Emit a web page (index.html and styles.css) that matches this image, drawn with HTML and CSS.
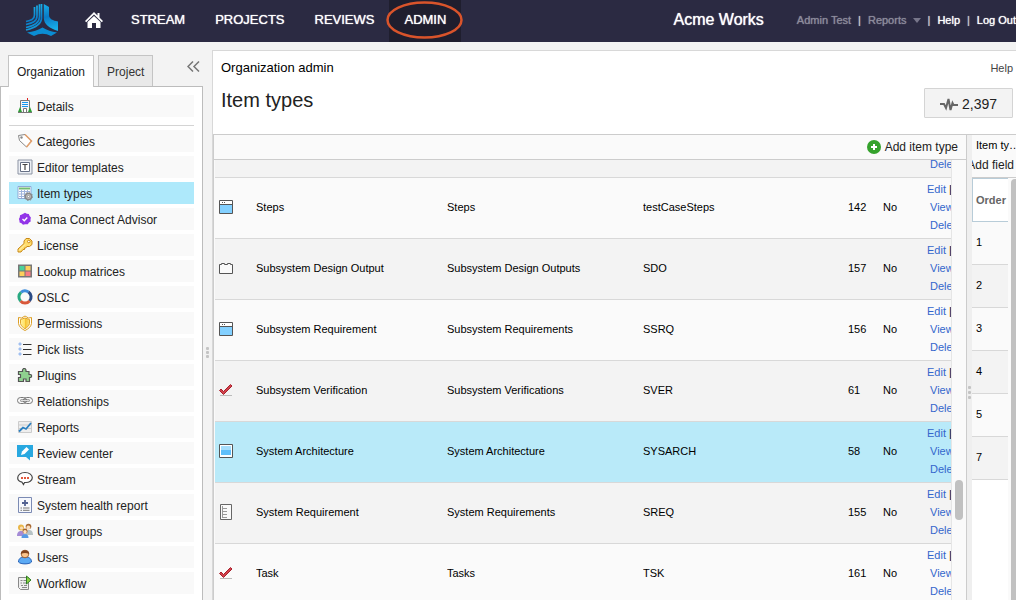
FILE: index.html
```html
<!DOCTYPE html>
<html lang="en">
<head>
<meta charset="utf-8">
<title>Item types - Organization admin</title>
<link rel="stylesheet" href="styles.css">
</head>
<body>
<svg class="sprite" aria-hidden="true">
  <defs>
    <linearGradient id="blade" gradientUnits="userSpaceOnUse" x1="14" y1="2" x2="20" y2="28"><stop offset="0" stop-color="#18aee8"/><stop offset=".5" stop-color="#0a7ac5"/><stop offset="1" stop-color="#18aee8"/></linearGradient>
    <linearGradient id="gold" x1="0" y1="0" x2="1" y2="0"><stop offset="0" stop-color="#fff0a0"/><stop offset=".5" stop-color="#ffe060"/><stop offset=".5" stop-color="#f6c02c"/><stop offset="1" stop-color="#fbe07a"/></linearGradient>
  </defs>
  <symbol id="i-details" viewBox="0 0 16 16"><path d="M10.5 0v3" stroke="#d22" /><path d="M3.5 14V2.500h9V14" fill="#f4f4f4" stroke="#777"/><path d="M5 4.500h6M5 6.500h6M5 8.500h6" stroke="#1497f0"/><path d="M6.500 14v-3.500h3V14" fill="#fff" stroke="#777"/><path d="M1 14l2-5 2 5zM11 14l2-5 2 5z" fill="#2e9e35"/><path d="M1 14.500h14" stroke="#777"/></symbol>
  <symbol id="i-tag" viewBox="0 0 16 16"><path d="M1.500 2.500l6.500-1 6.500 6.500-5 6-7-6.500z" fill="#fff" stroke="#888"/><path d="M8 1.500l6.500 6.500-5 6" fill="none" stroke="#e3a06c" stroke-width="1.500"/><circle cx="4.500" cy="4.500" r="1.200" fill="#888"/></symbol>
  <symbol id="i-template" viewBox="0 0 16 16"><path d="M1 1h14v14H1z" fill="#eceff4" stroke="#8b93a3"/><path d="M3.500 3.500h9v9h-9z" fill="#fff" stroke="#667085"/><path d="M5.500 5.500h5M8 5.500V11" stroke="#444" stroke-width="1.200"/></symbol>
  <symbol id="i-types" viewBox="0 0 16 16"><path d="M1 1.500h13v12H1z" fill="#fff" stroke="#8fa9d5"/><path d="M2 3.500h11" stroke="#72bd72" stroke-width="2"/><path d="M2 6.500h11M2 9h8M2 11.500h7M4.500 5v8M7.500 5v8M10.500 5v4" stroke="#9fb4dc"/><circle cx="11.500" cy="11.500" r="3" fill="#ddd" stroke="#888" stroke-width="1.500"/><circle cx="11.500" cy="11.500" r="4" fill="none" stroke="#888" stroke-dasharray="1.500 1.600"/><circle cx="11.500" cy="11.500" r="1.200" fill="#fff" stroke="#888"/></symbol>
  <symbol id="i-advisor" viewBox="0 0 16 16"><path d="M8 1.800l1.800 1 2 .2.800 1.900 1.300 1.500-.4 2 .2 2-1.700 1.200-1.200 1.700H8l-2 .4-1.500-1.400-1.900-.9-.2-2L1.900 8l.9-1.800.2-2 1.900-.8z" fill="#9235e8"/><path d="M5.500 8l1.800 1.800 3-3.300" fill="none" stroke="#fff" stroke-width="1.300"/></symbol>
  <symbol id="i-key" viewBox="0 0 16 16"><path d="M9 1.500h3.500L15 4v3.500L12.500 9.500H9.800l-1 1.500H7.500v1.500H6L4 15H1v-3l6-5.500V4z" fill="#ffdc6b" stroke="#c88818"/><path d="M2 13.500l6-6" stroke="#fff3b8"/><circle cx="11.800" cy="4.500" r="1.300" fill="#fff" stroke="#c88818"/></symbol>
  <symbol id="i-matrix" viewBox="0 0 16 16"><path d="M1 1.500h14v13H1z" fill="#777"/><path d="M2.500 3h5v4.500h-5z" fill="#4bd19a"/><path d="M8.500 3h5v4.500h-5zM2.500 8.500h5V13h-5z" fill="#fdd05c"/><path d="M8.500 8.500h5V13h-5z" fill="#fa7d83"/></symbol>
  <symbol id="i-oslc" viewBox="0 0 16 16"><g fill="none" stroke-width="3"><path d="M4 3.400A6 6 0 0 1 11.500 3" stroke="#3d8ddd"/><path d="M11.500 3A6 6 0 0 1 12.500 12" stroke="#2b4c86"/><path d="M12.500 12A6 6 0 0 1 3.500 12" stroke="#d9583a"/><path d="M3.500 12A6 6 0 0 1 4 3.400" stroke="#28a981"/></g></symbol>
  <symbol id="i-shield" viewBox="0 0 16 16"><path d="M1.500 2.500l3 .5L8 1l3.500 2 3-.5v6C14 12 11 14 8 15.500 5 14 2 12 1.500 8.500z" fill="#fff" stroke="#dc9f25"/><path d="M3.500 4.500L8 3l4.500 1.500V8.500C12 11 10 12.500 8 13.700 6 12.500 4 11 3.500 8.500z" fill="url(#gold)" stroke="#e0a42b"/></symbol>
  <symbol id="i-list" viewBox="0 0 16 16"><path d="M2 2h2v2H2zM2 7h2v2H2zM2 12h2v2H2z" fill="#8ab0ec" stroke="#a7c4f2"/><path d="M6 3.500h8.500M6 8.500h8.500M6 13.500h8.500" stroke="#333"/></symbol>
  <symbol id="i-plugin" viewBox="0 0 16 16"><path d="M1.500 4.500h4V3l1-1.500h1.500l1 1.500v1.500h3V7.500h1.500l1 .5v2l-1 .5H12.500v4h-3.500v-2.500h-2.500v2.500h-5v-4h2V7.500h-2z" fill="#8fd08f" stroke="#555" stroke-width="1.200"/></symbol>
  <symbol id="i-chain" viewBox="0 0 16 16"><g fill="none" stroke="#777"><rect x=".5" y="4.500" width="9" height="6" rx="3"/><rect x="6.500" y="4.500" width="9" height="6" rx="3"/><path d="M3.500 7.500h9" stroke="#555" stroke-width="2"/><path d="M4 7.500h8" stroke="#ddd"/></g></symbol>
  <symbol id="i-chart" viewBox="0 0 16 16"><path d="M1.500 2.500h13v11h-13z" fill="#eee" stroke="#ccc"/><path d="M2 6h12M2 9.500h12" stroke="#ccc"/><path d="M2 12.500l4-4 3 1.500 5-6" fill="none" stroke="#2a7fc0" stroke-width="1.800"/></symbol>
  <symbol id="i-review" viewBox="0 0 16 16"><path d="M0 0h16v12h-3v3.500L9 12H0z" fill="#28a8e0"/><path d="M4 10l1-3.500L9.500 2 12 4.500 7.500 9z" fill="#fff"/></symbol>
  <symbol id="i-stream" viewBox="0 0 16 16"><path d="M8 1.500c4.500 0 7.300 2.500 7.300 5.300S12 11.500 9 11.500H7.500L6.500 13.500 5 11.200C2.500 10.600.7 9 .7 7 .7 4 3.500 1.500 8 1.500z" fill="#fff" stroke="#444" stroke-width="1.200"/><path d="M4 6h2v2H4zM7 6h2v2H7zM10 6h2v2h-2z" fill="#e2573c"/></symbol>
  <symbol id="i-health" viewBox="0 0 16 16"><path d="M1.500.500h13v15h-13z" fill="#f6f8fd" stroke="#7c8bb4"/><path d="M8 3v6M5 6h6" stroke="#526293" stroke-width="1.800"/><path d="M3.500 11h1.500M6 11h6.500M3.500 13.300h1.500M6 13.300h6.500" stroke="#777"/></symbol>
  <symbol id="i-group" viewBox="0 0 16 16"><circle cx="4" cy="4.500" r="3" fill="#e9b648"/><circle cx="4.500" cy="5" r="1.600" fill="#fbdcba"/><path d="M0 13c0-4 2-5 4-5s3 1 3 5z" fill="#a48bd6"/><circle cx="11.500" cy="3.500" r="2.800" fill="#a96b35"/><circle cx="11.300" cy="4.500" r="1.900" fill="#fbdcba"/><path d="M9 12c0-4 1-5 3-5s4 1 4 5z" fill="#b7c3c6"/><circle cx="8" cy="8" r="2.500" fill="#a2612c"/><circle cx="8" cy="8.800" r="1.800" fill="#ffdfbd"/><path d="M4.500 15c0-3 1.500-4 3.500-4s3.500 1 3.500 4z" fill="#5799e4"/></symbol>
  <symbol id="i-user" viewBox="0 0 16 16"><path d="M1.500 13c0-4 3-5 6.500-5s6.500 1 6.500 5c-2 2.500-11 2.500-13 0z" fill="#5caaf4" stroke="#255fb5"/><circle cx="8" cy="5" r="3.800" fill="#fbc48b" stroke="#8a4a1c" stroke-width=".8"/><path d="M3.800 5C3.500 0 12.500 0 12.200 5 9 3.800 7 3.800 3.800 5z" fill="#81441d"/></symbol>
  <symbol id="i-flow" viewBox="0 0 16 16"><path d="M1.500 2.500h10v12h-8l-2-2z" fill="#eee" stroke="#888"/><path d="M3.500 5.500h2M6.500 5.500H9M3.500 8h1.500M6 8h3M4 10.500h2M7 10.500h3M5 12.500h5" stroke="#888"/><path d="M9.500 1v8l4.500-4z" fill="#8bd042" stroke="#2f7d26"/></symbol>
  <symbol id="i-window" viewBox="0 0 16 16"><path d="M1.500 1.500h13v13h-13z" fill="#fff" stroke="#555"/><path d="M2 6h12v8H2z" fill="#83d0ff"/><path d="M2 5.500h12" stroke="#555"/><path d="M4 3.500h1M6 3.500h1" stroke="#555"/></symbol>
  <symbol id="i-brick" viewBox="0 0 16 16"><path d="M1.500 4.500h2v-1h3v1h3v-1h3v1h2v9h-13z" fill="#fafafa" stroke="#555"/></symbol>
  <symbol id="i-check" viewBox="0 0 16 16"><path d="M2 13.500h12" stroke="#bbb"/><path d="M1.500 8.500l1.500-1.500 2.500 2.500 7-7 1.500 1.500L5.500 12.500z" fill="#d0404a" stroke="#a8202c"/></symbol>
  <symbol id="i-screen" viewBox="0 0 16 16"><path d="M1.500 1.500h13v13h-13z" fill="#fff" stroke="#555"/><path d="M3 3h10v4H3z" fill="#a5defc"/><path d="M3 7h10v5H3z" fill="#60bffa"/></symbol>
  <symbol id="i-ruler" viewBox="0 0 16 16"><path d="M2.500.500h11v15h-11z" fill="#fafafa" stroke="#666"/><path d="M4.500 2v12M5 4.500h4M5 7.500h4M5 10.500h4M5 13.500h4" stroke="#999"/></symbol>
</svg>

<header class="topbar">
  <a class="logo" href="#" aria-label="Jama Connect">
    <svg viewBox="0 0 34 34"><g fill="none" stroke="url(#blade)" stroke-width="1.700"><path d="M9.500 4V12C9.500 16.500 6 17.500 1 18.500"/><path d="M12 2.500V13C12 18.500 7 20 1 21.500"/><path d="M14.500 1.300V14C14.500 20.500 8 23 1 24.500"/><path d="M16.500 1V15C16.500 21.500 9 25 1 27"/></g><path d="M18.800 1L24 4V12C24 16 28 17.500 33 18.500V28C25 25.500 18.800 21.500 18.800 15Z" fill="url(#blade)"/><path d="M2 29.500Q11 28.500 17.500 24.500 24 28.500 32 29.500L26 33Q17.500 28.500 9 33Z" fill="#0b8dd3"/></svg>
  </a>
  <a class="home" href="#" aria-label="Home">
    <svg viewBox="0 0 18 16"><path d="M9 0l3.500 3.500V1h2v4.500L18 9l-1.200 1.200L9 2.600 1.200 10.200 0 9z" fill="#fff"/><path d="M9 4l6.500 6v6H11v-5H7v5H2.500v-6z" fill="#fff"/></svg>
  </a>
  <nav class="nav">
    <a href="#">STREAM</a>
    <a href="#">PROJECTS</a>
    <a href="#">REVIEWS</a>
    <a href="#" class="current">ADMIN<svg class="ring" viewBox="0 0 77 38"><ellipse cx="38.500" cy="19" rx="37" ry="17.500" fill="none" stroke="#d9542b" stroke-width="2.500"/></svg></a>
  </nav>
  <strong class="org">Acme Works</strong>
  <div class="account">
    <a class="dim" href="#">Admin Test</a><i>|</i><a class="dim" href="#">Reports <svg viewBox="0 0 8 5"><path d="M0 0h8L4 5z" fill="#77768a"/></svg></a><i>|</i><a href="#">Help</a><i>|</i><a href="#">Log Out</a>
  </div>
</header>

<div class="page">
  <aside class="side">
    <div class="tabs">
      <button class="tab on">Organization</button>
      <button class="tab">Project</button>
      <button class="collapse" aria-label="Collapse"><svg viewBox="0 0 13 11"><path d="M6 .500l-5 5 5 5M12 .500l-5 5 5 5" fill="none" stroke="#777" stroke-width="1.500"/></svg></button>
    </div>
    <nav class="menu">
      <a href="#"><svg><use href="#i-details"/></svg>Details</a>
      <hr>
      <a href="#"><svg><use href="#i-tag"/></svg>Categories</a>
      <a href="#"><svg><use href="#i-template"/></svg>Editor templates</a>
      <a href="#" class="on"><svg><use href="#i-types"/></svg>Item types</a>
      <a href="#"><svg><use href="#i-advisor"/></svg>Jama Connect Advisor</a>
      <a href="#"><svg><use href="#i-key"/></svg>License</a>
      <a href="#"><svg><use href="#i-matrix"/></svg>Lookup matrices</a>
      <a href="#"><svg><use href="#i-oslc"/></svg>OSLC</a>
      <a href="#"><svg><use href="#i-shield"/></svg>Permissions</a>
      <a href="#"><svg><use href="#i-list"/></svg>Pick lists</a>
      <a href="#"><svg><use href="#i-plugin"/></svg>Plugins</a>
      <a href="#"><svg><use href="#i-chain"/></svg>Relationships</a>
      <a href="#"><svg><use href="#i-chart"/></svg>Reports</a>
      <a href="#"><svg><use href="#i-review"/></svg>Review center</a>
      <a href="#"><svg><use href="#i-stream"/></svg>Stream</a>
      <a href="#"><svg><use href="#i-health"/></svg>System health report</a>
      <a href="#"><svg><use href="#i-group"/></svg>User groups</a>
      <a href="#"><svg><use href="#i-user"/></svg>Users</a>
      <a href="#"><svg><use href="#i-flow"/></svg>Workflow</a>
    </nav>
  </aside>
  <div class="splitter"><span></span><span></span><span></span></div>
  <main class="main">
    <div class="heading">
      <div>
        <p class="crumb">Organization admin</p>
        <h1>Item types</h1>
      </div>
      <div class="heading-side">
        <a href="#" class="help">Help</a>
        <button class="activity"><svg viewBox="0 0 18 14"><path d="M0 7h4l2 4 2.500-9 2 11 2-7 1 2H18" fill="none" stroke="#666" stroke-width="2"/></svg>2,397</button>
      </div>
    </div>
    <div class="panes">
      <section class="types">
        <div class="toolbar"><button class="add"><svg viewBox="0 0 14 14"><circle cx="7" cy="7" r="7" fill="#35a22c"/><path d="M7 4v6M4 7h6" stroke="#fff" stroke-width="2"/></svg>Add item type</button></div>
        <div class="scroller">
          <div class="rows">
            <table>
              <colgroup><col class="c-icon"><col class="c-name"><col class="c-plural"><col class="c-key"><col class="c-id"><col class="c-flag"><col class="c-act"></colgroup>
              <tbody>
              <tr><td></td><td></td><td></td><td></td><td></td><td></td><td class="act"><span><a href="#">Edit</a> |</span><span><a href="#">View</a> |</span><span><a href="#">Delete</a></span></td></tr>
              <tr><td><svg><use href="#i-window"/></svg></td><td>Steps</td><td>Steps</td><td>testCaseSteps</td><td>142</td><td>No</td><td class="act"><span><a href="#">Edit</a> |</span><span><a href="#">View</a> |</span><span><a href="#">Delete</a></span></td></tr>
              <tr><td><svg><use href="#i-brick"/></svg></td><td>Subsystem Design Output</td><td>Subsystem Design Outputs</td><td>SDO</td><td>157</td><td>No</td><td class="act"><span><a href="#">Edit</a> |</span><span><a href="#">View</a> |</span><span><a href="#">Delete</a></span></td></tr>
              <tr><td><svg><use href="#i-window"/></svg></td><td>Subsystem Requirement</td><td>Subsystem Requirements</td><td>SSRQ</td><td>156</td><td>No</td><td class="act"><span><a href="#">Edit</a> |</span><span><a href="#">View</a> |</span><span><a href="#">Delete</a></span></td></tr>
              <tr><td><svg><use href="#i-check"/></svg></td><td>Subsystem Verification</td><td>Subsystem Verifications</td><td>SVER</td><td>61</td><td>No</td><td class="act"><span><a href="#">Edit</a> |</span><span><a href="#">View</a> |</span><span><a href="#">Delete</a></span></td></tr>
              <tr class="selected"><td><svg><use href="#i-screen"/></svg></td><td>System Architecture</td><td>System Architecture</td><td>SYSARCH</td><td>58</td><td>No</td><td class="act"><span><a href="#">Edit</a> |</span><span><a href="#">View</a> |</span><span><a href="#">Delete</a></span></td></tr>
              <tr><td><svg><use href="#i-ruler"/></svg></td><td>System Requirement</td><td>System Requirements</td><td>SREQ</td><td>155</td><td>No</td><td class="act"><span><a href="#">Edit</a> |</span><span><a href="#">View</a> |</span><span><a href="#">Delete</a></span></td></tr>
              <tr><td><svg><use href="#i-check"/></svg></td><td>Task</td><td>Tasks</td><td>TSK</td><td>161</td><td>No</td><td class="act"><span><a href="#">Edit</a> |</span><span><a href="#">View</a> |</span><span><a href="#">Delete</a></span></td></tr>
              </tbody>
            </table>
          </div>
          <div class="track"><div class="thumb"></div></div>
        </div>
      </section>
      <div class="splitter thin"><span></span><span></span><span></span></div>
      <section class="fields">
        <div class="fields-head">
          <h2>Item ty…</h2>
          <button>Add field</button>
        </div>
        <div class="fields-body">
          <table>
            <thead><tr><th>Order</th></tr></thead>
            <tbody><tr><td>1</td></tr><tr><td>2</td></tr><tr><td>3</td></tr><tr><td>4</td></tr><tr><td>5</td></tr><tr><td>7</td></tr></tbody>
          </table>
          <div class="fields-track"></div>
        </div>
      </section>
    </div>
  </main>
</div>
</body>
</html>
```
FILE: styles.css
```css
* { box-sizing: border-box; }
body {
  margin: 0;
  height: 100vh;
  overflow: hidden;
  display: flex;
  flex-direction: column;
  background: #f3f3f3;
  color: #222;
  font: 12px/18px "Liberation Sans", Arial, sans-serif;
}
a { color: inherit; text-decoration: none; }
button { font: inherit; color: inherit; margin: 0; padding: 0; border: 0; background: none; white-space: nowrap; }
h1, h2, p { margin: 0; font-weight: normal; }
.sprite { position: absolute; width: 0; height: 0; }

.topbar {
  flex: none;
  height: 42px;
  display: flex;
  align-items: center;
  padding-left: 25px;
  background: #2b2a42;
  color: #fff;
  white-space: nowrap;
}
.logo svg { display: block; width: 34px; height: 34px; margin-bottom: 2px; }
.home { margin: 0 13px 0 26px; }
.home svg { display: block; width: 18px; height: 16px; margin-bottom: 2px; }
.nav { display: flex; flex: 1; font-size: 13px; line-height: 40px; text-shadow: 0 0 1px #fff; }
.nav a { padding: 0 15px 2px; }
.nav .current { position: relative; background: #1f1e2e; }
.ring { position: absolute; left: -3px; top: 1px; width: 77px; height: 38px; }
.org { font-size: 16px; font-weight: normal; text-shadow: 0 0 1px #fff; margin: 0 33px 3px 0; }
.account { font-size: 11px; margin: 0 0 3px; text-shadow: 0 0 1px currentColor; }
.account i { font-style: normal; margin: 0 7px; color: #c8c8d0; }
.account .dim { color: #8c8b9b; }
.account svg { width: 8px; height: 5px; margin-left: 3px; vertical-align: middle; }

.page { flex: 1; min-height: 0; display: flex; }
.side { width: 203px; flex: none; display: flex; flex-direction: column; padding-top: 13px; }
.tabs { display: flex; align-items: flex-start; gap: 4px; padding-left: 8px; }
.tab {
  height: 31px;
  padding: 2px 8px 0;
  border: 1px solid #c4c4c4;
  border-bottom: 0;
  background: #e9e9e9;
  color: #333;
}
.tab.on { height: 32px; margin-bottom: -1px; padding-top: 0; position: relative; background: #fff; color: #222; }
.collapse { margin: 6px 3px 0 auto; }
.collapse svg { display: block; width: 13px; height: 11px; }
.menu {
  flex: 1;
  min-height: 0;
  overflow: hidden;
  display: flex;
  flex-direction: column;
  gap: 4px;
  padding: 8px;
  border: 1px solid #bcbcbc;
  border-bottom: 0;
  background: #fff;
}
.menu a { flex: none; display: flex; align-items: center; gap: 4px; height: 22px; padding: 2px 0 0 8px; background: #f9f9f9; }
.menu a.on { background: #aee9fb; }
.menu svg { width: 16px; height: 16px; margin-bottom: 2px; }
.menu hr { width: 100%; margin: 4px 0 0; border: 0; border-top: 1px solid #d4d4d4; }
.splitter { flex: none; width: 9px; display: flex; flex-direction: column; align-items: center; justify-content: center; gap: 1px; padding-top: 62px; }
.splitter span { width: 3px; height: 3px; border-radius: 1px; background: #c4c4c4; }

.main {
  flex: 1;
  min-width: 0;
  display: flex;
  flex-direction: column;
  margin-top: 8px;
  background: #fff;
  border: solid #d8d8d8;
  border-width: 1px 0 0 1px;
}
.heading { flex: none; display: flex; justify-content: space-between; height: 83px; padding: 8px 3px 0 8px; }
.crumb { font-size: 13px; color: #000; }
.heading h1 { font-size: 20px; line-height: 24px; margin-top: 11px; }
.heading-side { display: flex; flex-direction: column; align-items: flex-end; gap: 11px; }
.help { font-size: 11px; color: #444; }
.activity { display: flex; align-items: center; gap: 4px; height: 30px; padding: 2px 15px 0; border: 1px solid #d4d4d4; border-radius: 1px; background: #f3f3f3; font-size: 14px; }
.activity svg { width: 18px; height: 14px; }

.panes { flex: 1; min-height: 0; display: flex; border-top: 1px solid #ccc; }
.types { flex: 1; min-width: 0; display: flex; flex-direction: column; border: solid #ccc; border-width: 0 1px; background: #fafafa; }
.toolbar { flex: none; height: 25px; display: flex; justify-content: flex-end; align-items: center; padding-right: 8px; border-bottom: 1px solid #ccc; }
.add { display: flex; align-items: center; gap: 4px; }
.add svg { width: 14px; height: 14px; }
.scroller { flex: 1; min-height: 0; display: flex; padding-left: 1px; }
.rows { flex: 1; min-width: 0; overflow: hidden; }
.rows table { width: 100%; margin-top: -43px; table-layout: fixed; border-collapse: separate; border-spacing: 0; font-size: 11px; color: #000; }
.rows td { height: 61px; padding: 0 0 2px; border-bottom: 1px solid #d8d8d8; background: #fafafa; white-space: nowrap; overflow: hidden; }
.rows tr:nth-child(odd) td { background: #f3f3f3; }
.rows tr.selected td { background: #b9eaf9; }
.rows td svg { display: block; width: 16px; height: 16px; margin-left: 3px; }
.c-icon { width: 41px; }
.c-name { width: 191px; }
.c-key { width: 205px; }
.c-id { width: 35px; }
.c-flag { width: 44px; }
.c-act { width: 24px; }
.act span { display: block; padding-left: 3px; }
.act span:first-child { padding-left: 0; }
.act a { color: #3366cc; }
.track { flex: none; width: 15px; display: flex; flex-direction: column; align-items: center; justify-content: flex-end; padding-bottom: 80px; border-left: 1px solid #e6e6e6; }
.thumb { width: 8px; height: 40px; border-radius: 4px; background: #c1c1c1; }

.thin { width: 5px; padding-top: 50px; background: #efefef; gap: 2px; }
.fields { flex: none; width: 44px; display: flex; flex-direction: column; background: #fafafa; }
.fields-head { flex: none; height: 43px; padding-top: 1px; border-bottom: 1px solid #ccc; overflow: hidden; }
.fields-head h2 { padding-left: 4px; font-size: 11px; color: #000; white-space: nowrap; }
.fields-head button { display: block; float: right; margin: 2px 2px 0 0; }
.fields-body { flex: 1; min-height: 0; display: flex; justify-content: space-between; background: linear-gradient(to right, #fff 36px, #fafafa 36px); }
.fields table { width: 36px; align-self: flex-start; border-collapse: separate; border-spacing: 0; font-size: 11px; color: #000; }
.fields th { height: 44px; padding: 0 0 0 3px; border: 1px solid #b8ccd8; border-right: 0; background: #fff; color: #666; text-align: left; }
.fields td { height: 43px; padding: 0 0 2px 4px; border-bottom: 1px solid #d8d8d8; background: #fafafa; }
.fields tbody tr:nth-child(even) td { background: #f3f3f3; }
.fields-track { width: 5px; margin-top: 1px; border-radius: 4px 0 0 0; background: #c1c1c1; }
```
